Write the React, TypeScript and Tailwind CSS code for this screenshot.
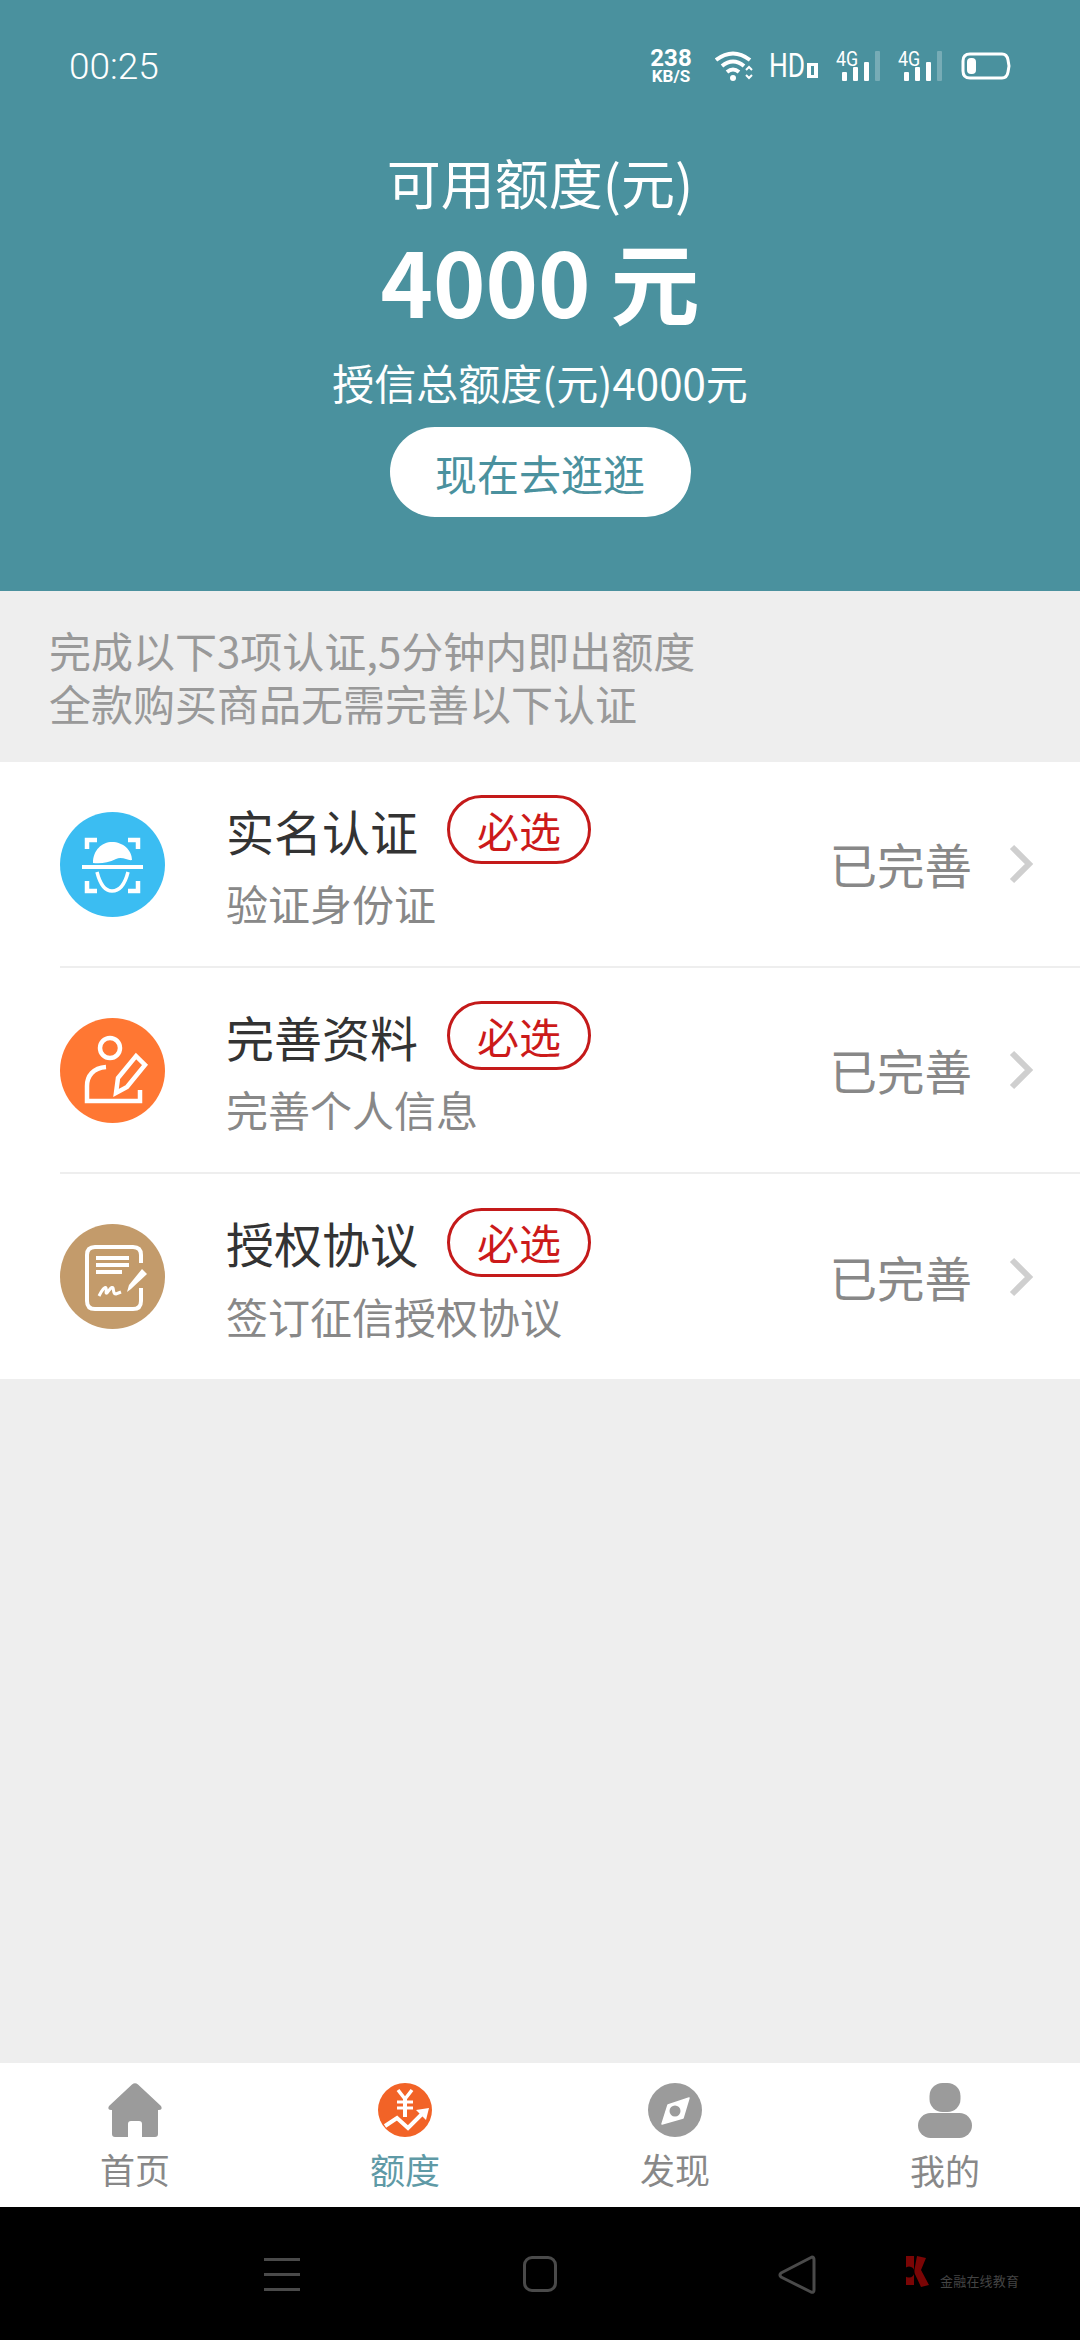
import React from 'react'

const cjk = { fontFamily: '"Noto Sans CJK SC", "Noto Sans", sans-serif' }

function SignalIcon() {
    return (
        <div className="relative h-[30px] w-[46px]">
            <span className="absolute left-0 top-[1px] origin-left scale-x-[0.85] text-[21px] leading-[15px] text-white [font-family:Roboto,sans-serif]">4G</span>
            <svg width="46" height="30" viewBox="0 0 46 30" className="absolute left-0 top-0">
                <rect x="6" y="21" width="5" height="9" rx="1" fill="#fff" />
                <rect x="17" y="16" width="5" height="14" rx="1" fill="#fff" />
                <rect x="28" y="11" width="5" height="19" rx="1" fill="#fff" />
                <rect x="39" y="0" width="5" height="30" rx="1" fill="#fff" fillOpacity="0.25" />
            </svg>
        </div>
    )
}

function StatusBar() {
    return (
        <div className="flex h-[132px] items-center justify-between pl-[69px] pr-[69px] text-white [font-family:Roboto,sans-serif]">
            <span className="text-[37px] font-light leading-none">00:25</span>
            <div className="flex items-center">
                <div className="flex w-[40px] flex-col items-center font-bold">
                    <span className="text-[24px] leading-[20px]">238</span>
                    <span className="mt-[1px] text-[17px] leading-[15px]">KB/S</span>
                </div>
                <svg width="38" height="30" viewBox="0 0 38 30" className="ml-[24px]">
                    <g fill="none" stroke="#fff" strokeWidth="4">
                        <path d="M1 9 Q18 -4 35 9" />
                        <path d="M7 15 Q18 6 29 15" />
                        <path d="M12 21 Q18 16 24 21" />
                    </g>
                    <circle cx="18" cy="27" r="3" fill="#fff" />
                    <path d="M31 19 l3-3 3 3 M31 24 l3 3 3-3" fill="none" stroke="#fff" strokeWidth="2" />
                </svg>
                <div className="ml-[16px] flex items-end">
                    <span className="w-[38px] origin-left scale-x-[0.8] text-[33px] leading-[26px]">HD</span>
                    <div className="mb-[1px] h-[15px] w-[11px] border-[3px] border-white border-l-[4px] border-r-[4px]" />
                </div>
                <div className="ml-[18px]"><SignalIcon /></div>
                <div className="ml-[16px]"><SignalIcon /></div>
                <svg width="50" height="28" viewBox="0 0 50 28" className="ml-[17px]">
                    <path d="M9 2 H41 Q46 2 47 8 L48 14 L47 20 Q46 26 41 26 H9 Q2 26 2 19 V9 Q2 2 9 2 Z" fill="none" stroke="#fff" strokeWidth="3" />
                    <rect x="6" y="6" width="9" height="16" rx="4" fill="#fff" />
                </svg>
            </div>
        </div>
    )
}

function FaceIcon() {
    return (
        <svg width="105" height="105" viewBox="0 0 105 105">
            <circle cx="52.5" cy="52.5" r="52.5" fill="#3bbdf2" />
            <g fill="none" stroke="#fff" strokeWidth="4.5">
                <path d="M27 37 V28 H37 M68 28 H78 V37 M27 69 V79 H37 M68 79 H78 V69" />
                <path d="M22 55 H83" strokeWidth="4" />
                <path d="M37 60 C40 72 45 79 52 79 C60 79 65 72 68 60" strokeWidth="3.5" />
            </g>
            <path d="M33 51 C33 38 42 30 52 30 C63 30 72 38 72 48 C68 49 62 44 56 47 C48 51 40 52 33 51 Z" fill="#fff" />
        </svg>
    )
}

function UserPenIcon() {
    return (
        <svg width="105" height="105" viewBox="0 0 105 105">
            <circle cx="52.5" cy="52.5" r="52.5" fill="#ff7733" />
            <g fill="none" stroke="#fff" strokeWidth="4.5">
                <circle cx="50" cy="30" r="10" />
                <path d="M46 49 C33 50 27 58 27 68 V83 H80 V72" />
                <path d="M56 75 L58 60 L76 38 L85 47 L67 69 Z" />
            </g>
        </svg>
    )
}

function ContractIcon() {
    return (
        <svg width="105" height="105" viewBox="0 0 105 105">
            <circle cx="52.5" cy="52.5" r="52.5" fill="#c39b6b" />
            <g fill="none" stroke="#fff" strokeWidth="4">
                <path d="M81 39 V31 Q81 23 73 23 H35 Q27 23 27 31 V77 Q27 85 35 85 H73 Q81 85 81 77 V64" />
                <path d="M36 34 H69 M36 41 H69 M36 48 H62" />
                <path d="M39 72 C42 66 45 62 46 64 C47 66 45 70 47 69 C49 66 52 62 53 64 C54 67 53 70 56 70 L61 68" strokeWidth="3" />
            </g>
            <path d="M71 65 L67 68 L69 61 L82 45 L87 50 Z" fill="#fff" />
        </svg>
    )
}

function Chevron() {
    return (
        <svg width="26" height="42" viewBox="0 0 26 42">
            <path d="M4 4 L21 21 L4 38" fill="none" stroke="#cfcfcf" strokeWidth="6" />
        </svg>
    )
}

const rows = [
    { title: '实名认证', desc: '验证身份证', icon: <FaceIcon /> },
    { title: '完善资料', desc: '完善个人信息', icon: <UserPenIcon /> },
    { title: '授权协议', desc: '签订征信授权协议', icon: <ContractIcon /> },
]

function AuthRow({ title, desc, icon, last }: { title: string, desc: string, icon: React.ReactNode, last: boolean }) {
    return (
        <div className="ml-[60px]">
            <div className={`flex items-center pr-[46px] ${last ? 'h-[205px]' : 'h-[204px]'}`}>
                <div className="shrink-0">{icon}</div>
                <div className="ml-[61px] flex flex-col pb-[5px]">
                    <div className="flex h-[69px] items-center">
                        <span className="w-[192px] text-[48px] leading-none text-[#333333]">{title}</span>
                        <span className="ml-[29px] flex h-[69px] w-[144px] items-center justify-center rounded-full border-[3px] border-[#c41a1a] text-[42px] leading-none text-[#cc1a1a]">必选</span>
                    </div>
                    <span className="mt-[14px] text-[42px] leading-[50px] text-[#888888]">{desc}</span>
                </div>
                <div className="ml-auto flex items-center">
                    <span className="text-[47.5px] leading-none text-[#888888]">已完善</span>
                    <span className="ml-[36px] flex"><Chevron /></span>
                </div>
            </div>
            {!last && <div className="h-[2px] bg-[#eeeeee]" />}
        </div>
    )
}

function HomeIcon() {
    return (
        <svg width="54" height="54" viewBox="0 0 54 54">
            <path d="M24 1.5 Q27 -1 30 1.5 L53 23 Q55 27 51 27 H50 V51 Q50 54 47 54 H34 V41 Q34 38 31 38 H23 Q20 38 20 41 V54 H7 Q4 54 4 51 V27 H3 Q-1 27 1 23 Z" fill="#9b9b9b" />
        </svg>
    )
}

function CreditIcon() {
    return (
        <svg width="54" height="54" viewBox="0 0 54 54">
            <circle cx="27" cy="27" r="27" fill="#f26327" />
            <g fill="none" stroke="#fff">
                <path d="M20 7 L27 16 L34 7" strokeWidth="3.5" />
                <path d="M19 19 H35 M19 25 H35" strokeWidth="3" />
                <path d="M27 16 V34" strokeWidth="4" />
                <path d="M7 43 L19 35 L30 45 L45 30" strokeWidth="4" />
            </g>
            <path d="M38 27 L51 25 L48 37 Z" fill="#fff" />
        </svg>
    )
}

function CompassIcon() {
    return (
        <svg width="54" height="54" viewBox="0 0 54 54">
            <circle cx="27" cy="27" r="27" fill="#9b9b9b" />
            <path d="M41 15 L20 22 L14 41 L35 35 Z" fill="#fff" stroke="#fff" strokeWidth="1.5" strokeLinejoin="round" />
            <circle cx="27" cy="28" r="5.5" fill="#9b9b9b" />
        </svg>
    )
}

function UserIcon() {
    return (
        <svg width="54" height="55" viewBox="0 0 54 55">
            <rect x="11.5" y="0" width="31" height="29" rx="13" fill="#9b9b9b" />
            <rect x="0" y="30" width="54" height="25" rx="12.5" fill="#9b9b9b" />
        </svg>
    )
}

const tabs = [
    { label: '首页', icon: <HomeIcon />, active: false },
    { label: '额度', icon: <CreditIcon />, active: true },
    { label: '发现', icon: <CompassIcon />, active: false },
    { label: '我的', icon: <UserIcon />, active: false },
]

function NavBar() {
    return (
        <div className="relative flex h-[133px] items-start bg-black pl-[264px] pt-[49px]">
            <div className="mt-[2px] flex w-[36px] flex-col gap-[12px]">
                <div className="h-[3px] bg-[#4a4a4a]" />
                <div className="h-[3px] bg-[#4a4a4a]" />
                <div className="h-[3px] bg-[#4a4a4a]" />
            </div>
            <div className="ml-[223px] h-[36px] w-[34px] rounded-[9px] border-[3px] border-[#4a4a4a]" />
            <svg width="38" height="40" viewBox="0 0 38 40" className="ml-[221px] mt-[-1px]">
                <path d="M34 2 Q36 2 36 5 V35 Q36 38 33 37 L3 22 Q1 20 3 18 Z" fill="none" stroke="#4a4a4a" strokeWidth="3" strokeLinejoin="round" />
            </svg>
            {/* watermark over the bar */}
            <div className="absolute left-[903px] top-[48px] flex items-end">
                <svg width="32" height="32" viewBox="0 0 32 32">
                    <path d="M3 1 H11 V30 H3 Z M14 1 L23 3 L18 15 L26 30 L18 32 L11 17 Z" fill="#7a0505" />
                    <circle cx="6" cy="17" r="5.5" fill="#000" />
                    <circle cx="25" cy="15" r="5.5" fill="#000" />
                </svg>
                <span className="ml-[5px] text-[13px] leading-[12px] tracking-[0.2px] text-[#444444]">金融在线教育</span>
            </div>
        </div>
    )
}

export default function App() {
    return (
        <div className="flex h-[2340px] w-[1080px] flex-col overflow-hidden bg-[#eeeeee]" style={cjk}>
            {/* Header */}
            <div className="h-[591px] shrink-0 bg-[#4a919e] text-white">
                <StatusBar />
                <div className="flex flex-col items-center">
                    <div className="mt-[18px] text-[54px] leading-[64px]">可用额度(元)</div>
                    <div className="mt-[10px] text-[89px] font-bold leading-[112px]">4000 元</div>
                    <div className="mt-[18px] text-[42px] leading-[56px]">授信总额度(元)4000元</div>
                    <div className="mt-[17px] flex h-[90px] w-[301px] items-center justify-center rounded-full bg-white text-[42px] text-[#4a919e]">现在去逛逛</div>
                </div>
            </div>

            {/* Notice */}
            <div className="h-[171px] shrink-0 pl-[49px] pt-[32px] text-[42px] leading-[53px] text-[#999999]">
                <div>完成以下3项认证,5分钟内即出额度</div>
                <div>全款购买商品无需完善以下认证</div>
            </div>

            {/* Auth list */}
            <div className="shrink-0 bg-white">
                {rows.map((r, i) => (
                    <AuthRow key={r.title} title={r.title} desc={r.desc} icon={r.icon} last={i === rows.length - 1} />
                ))}
            </div>

            <div className="flex-1" />

            {/* Tabs */}
            <div className="grid h-[144px] shrink-0 grid-cols-4 bg-white pt-[20px]">
                {tabs.map((t) => (
                    <div key={t.label} className="flex flex-col items-center">
                        {t.icon}
                        <span className={`mt-[10px] text-[35px] leading-[44px] ${t.active ? 'text-[#5f9aa6]' : 'text-[#888888]'}`}>{t.label}</span>
                    </div>
                ))}
            </div>

            <NavBar />
        </div>
    )
}
